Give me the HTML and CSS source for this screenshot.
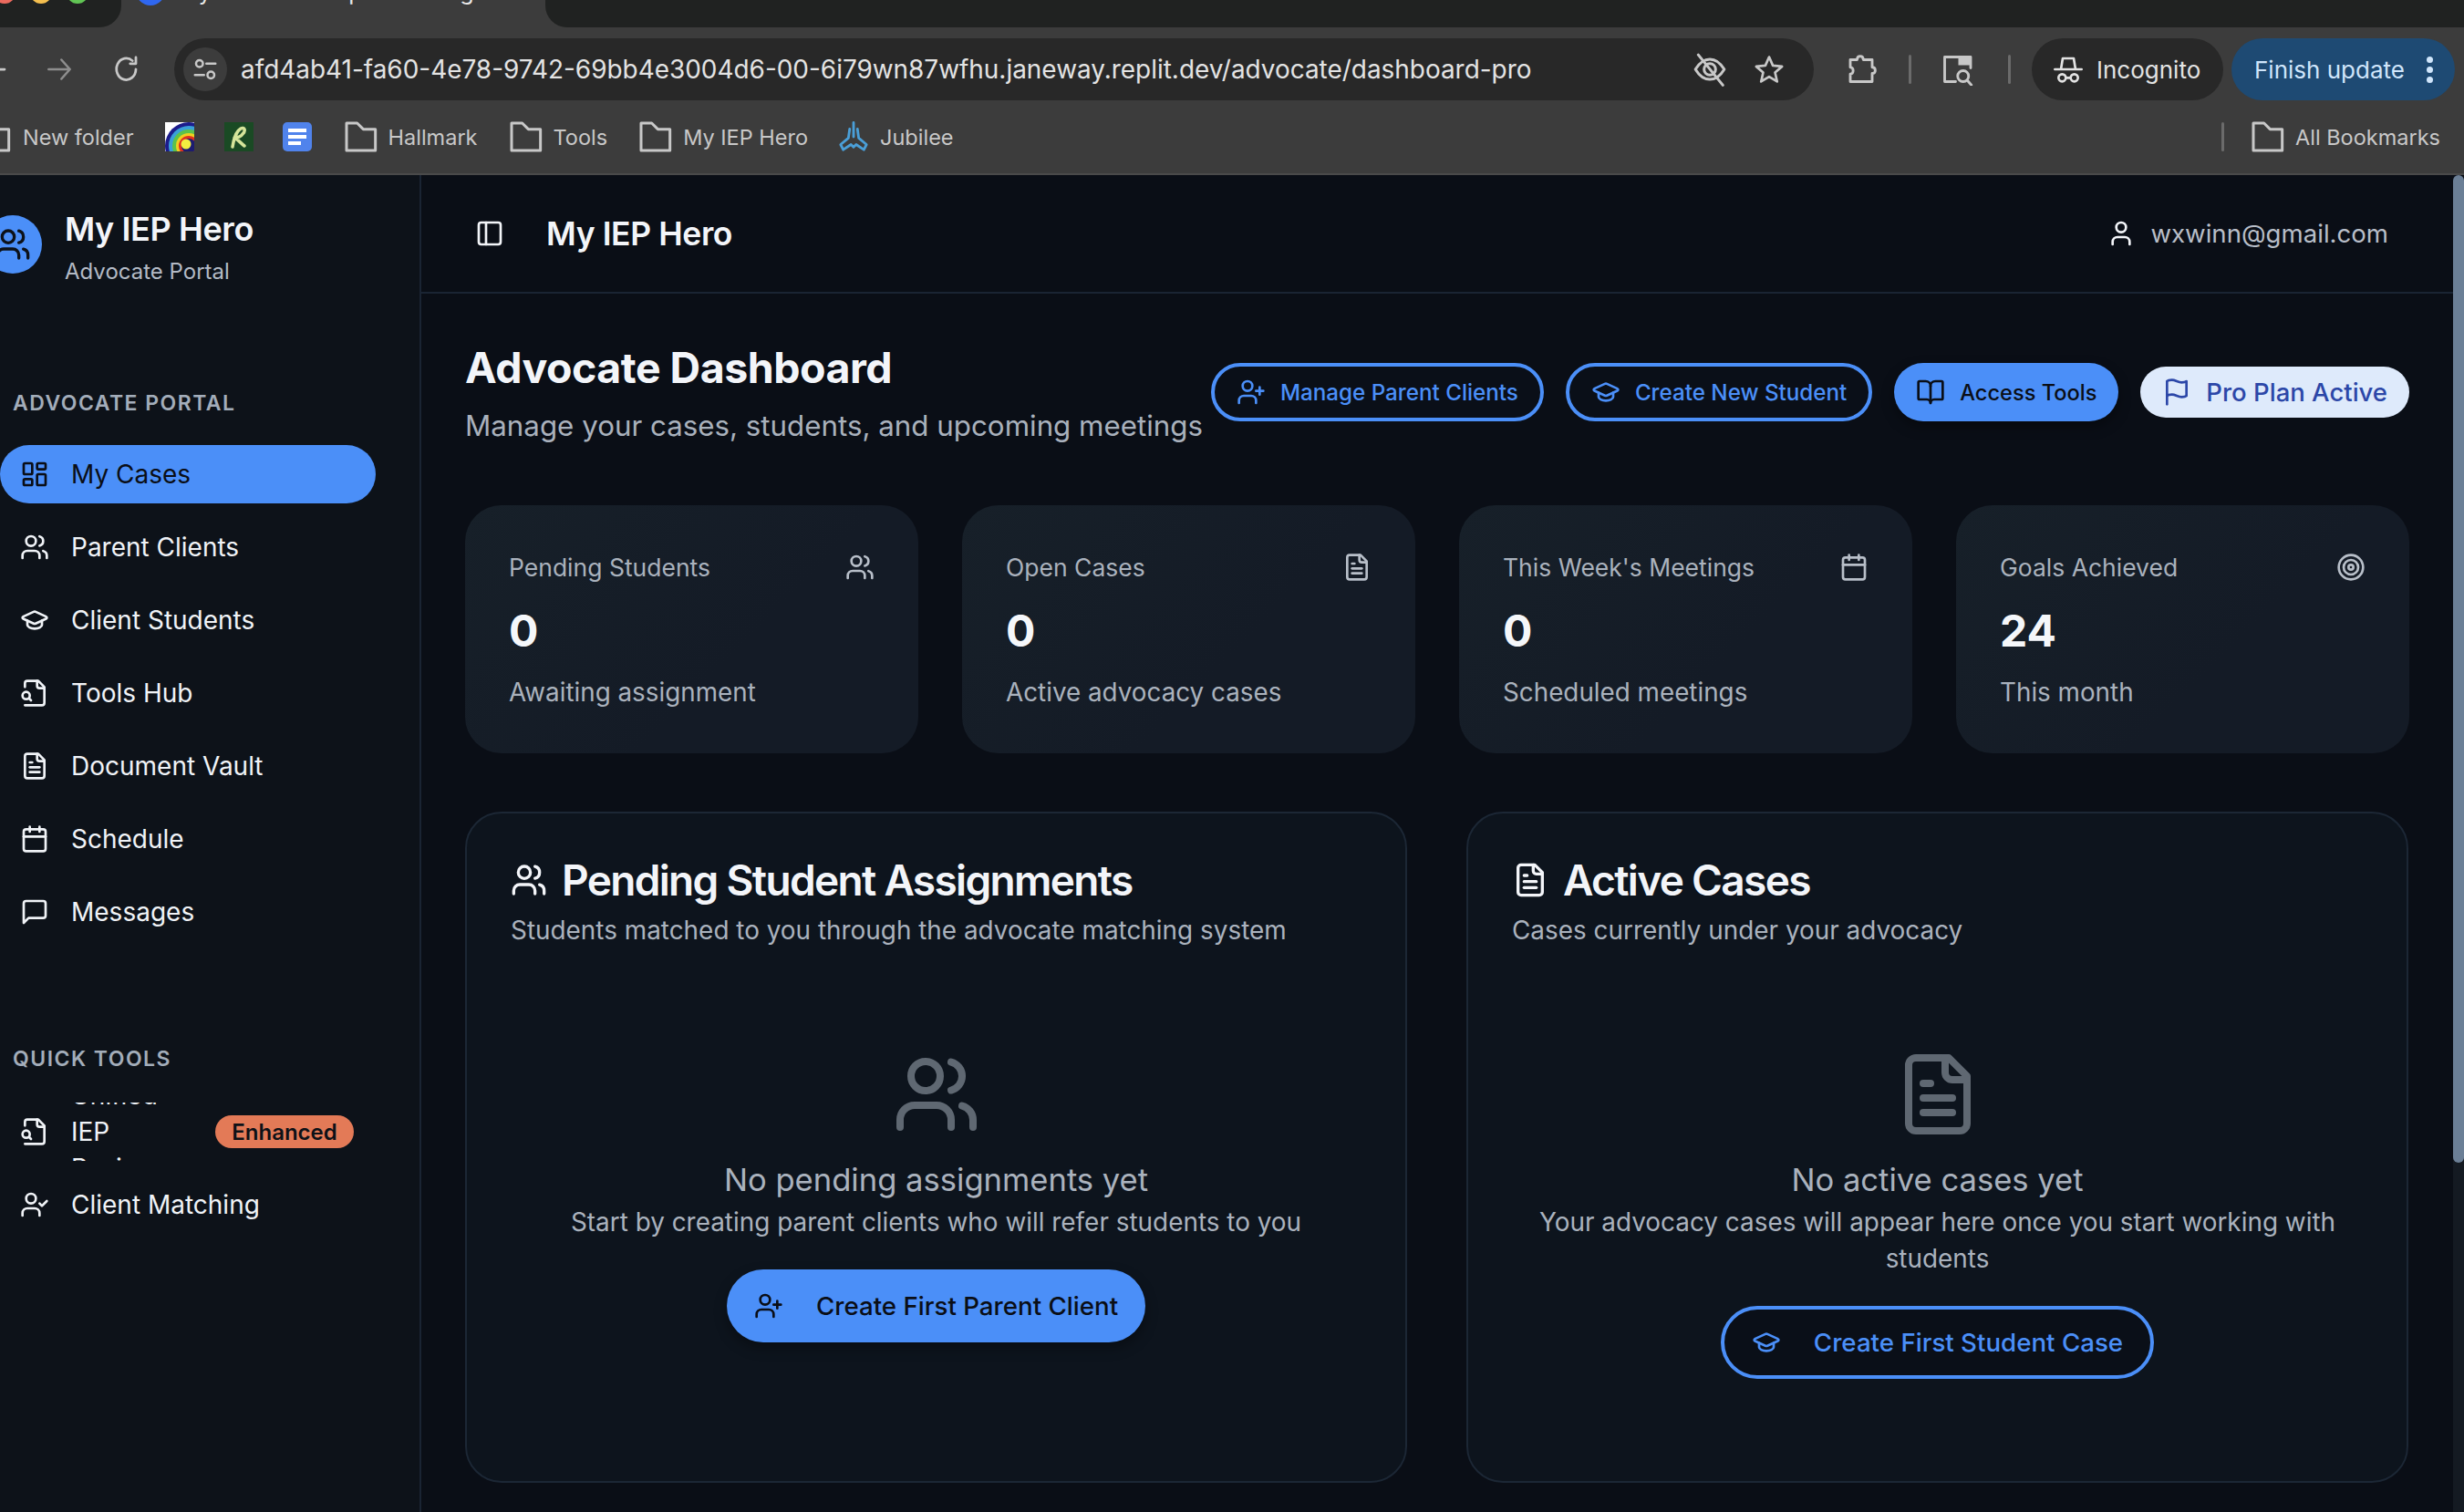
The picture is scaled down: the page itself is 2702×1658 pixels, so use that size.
FILE: index.html
```html
<!DOCTYPE html>
<html lang="en">
<head>
<meta charset="utf-8">
<title>My IEP Hero</title>
<link rel="stylesheet" href="styles.css">
</head>
<body>
<svg class="sprite" xmlns="http://www.w3.org/2000/svg">
  <symbol id="i-users" viewBox="0 0 24 24"><path d="M16 21v-2a4 4 0 0 0-4-4H6a4 4 0 0 0-4 4v2"/><circle cx="9" cy="7" r="4"/><path d="M22 21v-2a4 4 0 0 0-3-3.87"/><path d="M16 3.13a4 4 0 0 1 0 7.75"/></symbol>
  <symbol id="i-dash" viewBox="0 0 24 24"><rect width="7" height="9" x="3" y="3" rx="1"/><rect width="7" height="5" x="14" y="3" rx="1"/><rect width="7" height="9" x="14" y="12" rx="1"/><rect width="7" height="5" x="3" y="16" rx="1"/></symbol>
  <symbol id="i-cap" viewBox="0 0 24 24"><path d="M21.42 10.922a1 1 0 0 0-.019-1.838L12.83 5.18a2 2 0 0 0-1.66 0L2.6 9.08a1 1 0 0 0 0 1.832l8.57 3.908a2 2 0 0 0 1.66 0z"/><path d="M6 12.5V16a6 3 0 0 0 12 0v-3.5"/></symbol>
  <symbol id="i-search-file" viewBox="0 0 24 24"><path d="M4 22h14a2 2 0 0 0 2-2V7l-5-5H6a2 2 0 0 0-2 2v3"/><path d="M14 2v4a2 2 0 0 0 2 2h4"/><path d="M5 17a3 3 0 1 0 0-6 3 3 0 0 0 0 6z"/><path d="m9 18-1.5-1.5"/></symbol>
  <symbol id="i-file" viewBox="0 0 24 24"><path d="M15 2H6a2 2 0 0 0-2 2v16a2 2 0 0 0 2 2h12a2 2 0 0 0 2-2V7Z"/><path d="M14 2v4a2 2 0 0 0 2 2h4"/><path d="M10 9H8"/><path d="M16 13H8"/><path d="M16 17H8"/></symbol>
  <symbol id="i-cal" viewBox="0 0 24 24"><path d="M8 2v4"/><path d="M16 2v4"/><rect width="18" height="18" x="3" y="4" rx="2"/><path d="M3 10h18"/></symbol>
  <symbol id="i-msg" viewBox="0 0 24 24"><path d="M21 15a2 2 0 0 1-2 2H7l-4 4V5a2 2 0 0 1 2-2h14a2 2 0 0 1 2 2z"/></symbol>
  <symbol id="i-ucheck" viewBox="0 0 24 24"><path d="M16 21v-2a4 4 0 0 0-4-4H6a4 4 0 0 0-4 4v2"/><circle cx="9" cy="7" r="4"/><polyline points="16 11 18 13 22 9"/></symbol>
  <symbol id="i-uplus" viewBox="0 0 24 24"><path d="M16 21v-2a4 4 0 0 0-4-4H6a4 4 0 0 0-4 4v2"/><circle cx="9" cy="7" r="4"/><line x1="19" x2="19" y1="8" y2="14"/><line x1="22" x2="16" y1="11" y2="11"/></symbol>
  <symbol id="i-book" viewBox="0 0 24 24"><path d="M12 7v14"/><path d="M3 18a1 1 0 0 1-1-1V4a1 1 0 0 1 1-1h5a4 4 0 0 1 4 4 4 4 0 0 1 4-4h5a1 1 0 0 1 1 1v13a1 1 0 0 1-1 1h-6a3 3 0 0 0-3 3 3 3 0 0 0-3-3z"/></symbol>
  <symbol id="i-flag" viewBox="0 0 24 24"><path d="M4 15s1-1 4-1 5 2 8 2 4-1 4-1V3s-1 1-4 1-5-2-8-2-4 1-4 1z"/><line x1="4" x2="4" y1="22" y2="15"/></symbol>
  <symbol id="i-target" viewBox="0 0 24 24"><circle cx="12" cy="12" r="10"/><circle cx="12" cy="12" r="6"/><circle cx="12" cy="12" r="2"/></symbol>
  <symbol id="i-user" viewBox="0 0 24 24"><path d="M19 21v-2a4 4 0 0 0-4-4H9a4 4 0 0 0-4 4v2"/><circle cx="12" cy="7" r="4"/></symbol>
  <symbol id="i-panel" viewBox="0 0 24 24"><rect width="18" height="18" x="3" y="3" rx="2"/><path d="M9 3v18"/></symbol>
  <symbol id="i-folder" viewBox="0 0 24 24"><path d="M3 21V3h7l4 4h8v14z"/></symbol>
</svg>

<div class="browser">
  <div class="tabstrip">
    <div class="tab-left">
      <span class="light light-r"></span><span class="light light-y"></span><span class="light light-g"></span>
    </div>
    <div class="tab-active"><span class="tab-fav"></span><span class="tab-title">My IEP Hero - Spark Change</span></div>
    <div class="tab-rest"></div>
  </div>
  <div class="toolbar">
    <svg class="tb-back" viewBox="0 0 24 24"><path d="M20 12H4M11 5l-7 7 7 7"/></svg>
    <svg class="tb-fwd" viewBox="0 0 24 24"><path d="M2 12h20M14 3l8 9-8 9"/></svg>
    <svg class="tb-reload" viewBox="0 0 24 24"><path d="M20 12a8.5 9.5 0 1 1-3-7.5M20 1.5v5.5h-5"/></svg>
    <div class="omnibox">
      <span class="site-chip"><svg viewBox="0 0 24 24"><circle cx="7" cy="7" r="3"/><path d="M13 7h8M3 17h8"/><circle cx="17" cy="17" r="3"/></svg></span>
      <span class="url">afd4ab41-fa60-4e78-9742-69bb4e3004d6-00-6i79wn87wfhu.janeway.replit.dev/advocate/dashboard-pro</span>
      <svg class="tb-ico eye" viewBox="0 0 24 24"><path d="M2 12c3-5 6-7 10-7s7 2 10 7c-3 5-6 7-10 7s-7-2-10-7z"/><circle cx="12" cy="12" r="4"/><path d="M4 2l17 21"/></svg>
      <svg class="tb-ico star" viewBox="0 0 24 24"><path d="M12 2.5l2.9 6.6 7.1.7-5.4 4.7 1.6 7-6.2-3.7-6.2 3.7 1.6-7L2 9.8l7.1-.7z"/></svg>
    </div>
    <svg class="tb-ico ext" viewBox="0 0 24 24"><path d="M4 5h5c0-3.500 4.500-3.500 4.500 0H20v5.500c3 0 3 4.500 0 4.500v6H4v-5.500c2.800 0 2.800-5 0-5z"/></svg>
    <span class="tb-sep"></span>
    <svg class="tb-ico lens" viewBox="0 0 24 24"><path d="M11 21H3V3h19v8"/><path class="lens-fill" d="M13 3h9v6h-9z"/><circle cx="16.500" cy="17" r="4"/><path d="M19.500 20l3 3.500"/></svg>
    <span class="tb-sep tb-sep-2"></span>
    <div class="pill pill-incog">
      <svg viewBox="0 0 24 24"><path d="M1 12h22M6 12l1.500-9h9L18 12"/><circle cx="7" cy="19" r="3"/><circle cx="17" cy="19" r="3"/><path d="M10 19h4"/></svg>
      <span>Incognito</span>
    </div>
    <div class="pill pill-update">
      <span>Finish update</span>
      <span class="dots"><i></i><i></i><i></i></span>
    </div>
  </div>
  <div class="bookmarks">
    <svg class="bm-folder bm-clip" viewBox="0 0 24 24"><use href="#i-folder"/></svg>
    <span class="bm-text bm-first">New folder</span>
    <svg class="fav fav-first" viewBox="0 0 32 32"><rect width="32" height="32" fill="#fff"/><circle cx="26" cy="26" r="26" fill="#1c1c8c"/><circle cx="26" cy="26" r="22" fill="#3aa0d8"/><circle cx="26" cy="26" r="18" fill="#5cc24a"/><circle cx="26" cy="26" r="14" fill="#f0d020"/><circle cx="26" cy="26" r="11" fill="#e03020"/><circle cx="26" cy="26" r="8" fill="#1c1c70"/><circle cx="23" cy="24" r="5.500" fill="#f2ee40"/></svg>
    <svg class="fav" viewBox="0 0 32 32"><rect width="32" height="32" fill="#1a4a24"/><path d="M9 27c1-7 4-17 9-20 4-2 6 2 2 6-2 3-6 4-9 4 3 1 7 6 11 9" fill="none" stroke="#d5e49a" stroke-width="3.500" stroke-linecap="round"/></svg>
    <svg class="fav fav-doc" viewBox="0 0 32 32"><rect width="32" height="32" rx="5" fill="#5083ec"/><path d="M6 7h20v4H6zM6 14h20v4H6zM6 21h14v4H6z" fill="#fff"/></svg>
    <svg class="bm-folder bm-g1" viewBox="0 0 24 24"><use href="#i-folder"/></svg><span class="bm-text">Hallmark</span>
    <svg class="bm-folder bm-g2" viewBox="0 0 24 24"><use href="#i-folder"/></svg><span class="bm-text">Tools</span>
    <svg class="bm-folder bm-g2" viewBox="0 0 24 24"><use href="#i-folder"/></svg><span class="bm-text">My IEP Hero</span>
    <svg class="jubilee" viewBox="0 0 24 24"><path d="M12 1v11M9 6l-1 7-6 5 2 4 6-4 2 2 2-2 6 4 2-4-6-5-1-7"/></svg><span class="bm-text">Jubilee</span>
    <span class="bm-sep"></span>
    <svg class="bm-folder" viewBox="0 0 24 24"><use href="#i-folder"/></svg><span class="bm-text">All Bookmarks</span>
  </div>
</div>

<div class="app">
  <aside class="sidebar">
    <div class="brand">
      <span class="brand-logo"><svg class="ico-40" viewBox="0 0 24 24"><use href="#i-users"/></svg></span>
      <div>
        <div class="brand-name">My IEP Hero</div>
        <div class="brand-sub">Advocate Portal</div>
      </div>
    </div>
    <div class="nav-label">ADVOCATE PORTAL</div>
    <nav class="nav">
      <a class="nav-item active"><svg class="ico-32" viewBox="0 0 24 24"><use href="#i-dash"/></svg><span>My Cases</span></a>
      <a class="nav-item"><svg class="ico-32" viewBox="0 0 24 24"><use href="#i-users"/></svg><span>Parent Clients</span></a>
      <a class="nav-item"><svg class="ico-32" viewBox="0 0 24 24"><use href="#i-cap"/></svg><span>Client Students</span></a>
      <a class="nav-item"><svg class="ico-32" viewBox="0 0 24 24"><use href="#i-search-file"/></svg><span>Tools Hub</span></a>
      <a class="nav-item"><svg class="ico-32" viewBox="0 0 24 24"><use href="#i-file"/></svg><span>Document Vault</span></a>
      <a class="nav-item"><svg class="ico-32" viewBox="0 0 24 24"><use href="#i-cal"/></svg><span>Schedule</span></a>
      <a class="nav-item"><svg class="ico-32" viewBox="0 0 24 24"><use href="#i-msg"/></svg><span>Messages</span></a>
    </nav>
    <div class="nav-label nav-label-2">QUICK TOOLS</div>
    <nav class="nav nav-2">
      <a class="nav-item"><svg class="ico-32" viewBox="0 0 24 24"><use href="#i-search-file"/></svg><span class="clip-wrap"><span class="clip-text">Unified IEP Review</span></span><span class="badge">Enhanced</span></a>
      <a class="nav-item"><svg class="ico-32" viewBox="0 0 24 24"><use href="#i-ucheck"/></svg><span>Client Matching</span></a>
    </nav>
  </aside>

  <div class="main">
    <header class="topbar">
      <svg class="ico-32 panel-ico" viewBox="0 0 24 24"><use href="#i-panel"/></svg>
      <div class="topbar-title">My IEP Hero</div>
      <div class="account">
        <svg class="ico-32" viewBox="0 0 24 24"><use href="#i-user"/></svg>
        <span>wxwinn@gmail.com</span>
      </div>
    </header>

    <main class="content">
      <section class="page-head">
        <div>
          <h1>Advocate Dashboard</h1>
          <p>Manage your cases, students, and upcoming meetings</p>
        </div>
        <div class="actions">
          <a class="btn btn-outline"><svg class="ico-32" viewBox="0 0 24 24"><use href="#i-uplus"/></svg>Manage Parent Clients</a>
          <a class="btn btn-outline"><svg class="ico-32" viewBox="0 0 24 24"><use href="#i-cap"/></svg>Create New Student</a>
          <a class="btn btn-solid btn-tools"><svg class="ico-32" viewBox="0 0 24 24"><use href="#i-book"/></svg>Access Tools</a>
          <span class="plan"><svg class="ico-32" viewBox="0 0 24 24"><use href="#i-flag"/></svg>Pro Plan Active</span>
        </div>
      </section>

      <section class="stats">
        <article class="stat">
          <div class="stat-top"><span>Pending Students</span><svg class="ico-32" viewBox="0 0 24 24"><use href="#i-users"/></svg></div>
          <div class="stat-value">0</div>
          <div class="stat-sub">Awaiting assignment</div>
        </article>
        <article class="stat">
          <div class="stat-top"><span>Open Cases</span><svg class="ico-32" viewBox="0 0 24 24"><use href="#i-file"/></svg></div>
          <div class="stat-value">0</div>
          <div class="stat-sub">Active advocacy cases</div>
        </article>
        <article class="stat">
          <div class="stat-top"><span>This Week's Meetings</span><svg class="ico-32" viewBox="0 0 24 24"><use href="#i-cal"/></svg></div>
          <div class="stat-value">0</div>
          <div class="stat-sub">Scheduled meetings</div>
        </article>
        <article class="stat">
          <div class="stat-top"><span>Goals Achieved</span><svg class="ico-32" viewBox="0 0 24 24"><use href="#i-target"/></svg></div>
          <div class="stat-value">24</div>
          <div class="stat-sub">This month</div>
        </article>
      </section>

      <section class="panels">
        <article class="panel">
          <h2><svg class="ico-40" viewBox="0 0 24 24"><use href="#i-users"/></svg>Pending Student Assignments</h2>
          <p class="panel-sub">Students matched to you through the advocate matching system</p>
          <div class="empty">
            <svg class="ico-big" viewBox="0 0 24 24"><use href="#i-users"/></svg>
            <h3>No pending assignments yet</h3>
            <p>Start by creating parent clients who will refer students to you</p>
            <a class="btn-lg btn-solid"><svg class="ico-32" viewBox="0 0 24 24"><use href="#i-uplus"/></svg>Create First Parent Client</a>
          </div>
        </article>
        <article class="panel">
          <h2><svg class="ico-40" viewBox="0 0 24 24"><use href="#i-file"/></svg>Active Cases</h2>
          <p class="panel-sub">Cases currently under your advocacy</p>
          <div class="empty">
            <svg class="ico-big" viewBox="0 0 24 24"><use href="#i-file"/></svg>
            <h3>No active cases yet</h3>
            <p>Your advocacy cases will appear here once you start working with students</p>
            <a class="btn-lg btn-outline"><svg class="ico-32" viewBox="0 0 24 24"><use href="#i-cap"/></svg>Create First Student Case</a>
          </div>
        </article>
      </section>
    </main>
    <div class="scrollbar"><div class="scroll-thumb"></div></div>
  </div>
</div>
</body>
</html>
```
FILE: styles.css
```css
* { box-sizing: border-box; }
html, body { margin: 0; height: 100%; }
body {
  width: 2702px;
  height: 1658px;
  overflow: hidden;
  background: #0a0e16;
  color: #f3f5f9;
  font-family: Inter, "Liberation Sans", sans-serif;
  display: flex;
  flex-direction: column;
}
.sprite { display: none; }
svg { fill: none; stroke: currentColor; stroke-width: 2; stroke-linecap: round; stroke-linejoin: round; flex: none; display: block; }
.ico-32 { width: 32px; height: 32px; }
.ico-40 { width: 40px; height: 40px; }
h1, h2, h3, p { margin: 0; }

/* browser chrome */
.browser { height: 192px; flex: none; background: #3c3c3c; border-bottom: 2px solid #4a4a4a; color: #c8c8c8; }
.tabstrip { height: 30px; display: flex; background: #3c3c3c; overflow: hidden; }
.tab-left { width: 133px; background: #202221; border-bottom-right-radius: 24px; display: flex; gap: 16px; }
.light { width: 24px; height: 24px; border-radius: 50%; margin-top: -20px; flex: none; }
.light-r { background: #ec6a5e; margin-left: -7px; }
.light-y { background: #f4bf4f; }
.light-g { background: #61c554; }
.tab-active { width: 465px; display: flex; gap: 14px; padding-left: 16px; }
.tab-fav { width: 32px; height: 32px; border-radius: 50%; background: #2f67f0; margin-top: -26px; flex: none; }
.tab-title { font-size: 25px; line-height: 30px; margin-top: -24px; color: #e8e8e8; white-space: nowrap; }
.tab-rest { flex: 1; background: #202221; border-bottom-left-radius: 24px; }
.toolbar { height: 80px; display: flex; align-items: center; padding-top: 12px; background: #3c3c3c; position: relative; }
.toolbar > svg { stroke: #c8c8c8; }
.tb-back { width: 30px; height: 30px; margin-left: -20px; stroke-width: 2.200; }
.toolbar > .tb-fwd { width: 28px; height: 28px; margin-left: 41px; stroke: #8e8e8e; stroke-width: 2.200; }
.tb-reload { width: 30px; height: 30px; margin-left: 45px; stroke-width: 2.200; }
.omnibox { width: 1798px; height: 68px; margin-left: 37px; border-radius: 34px; background: #282828; display: flex; align-items: center; padding-left: 10px; flex: none; }
.site-chip { width: 48px; height: 48px; border-radius: 50%; background: #3c3c3c; display: flex; align-items: center; justify-content: center; flex: none; }
.site-chip svg { width: 30px; height: 30px; stroke-width: 2; }
.url { margin-left: 15px; font-size: 27.930px; color: #e3e3e3; white-space: nowrap; width: 1592px; flex: none; }
.tb-ico { width: 38px; height: 38px; stroke-width: 1.900; }
.omnibox .star { margin-left: 29px; width: 34px; height: 34px; }
.toolbar .ext { margin-left: 34px; width: 36px; height: 36px; }
.tb-sep { width: 3px; height: 32px; border-radius: 2px; background: #6b6b6b; margin-left: 34px; flex: none; }
.toolbar .lens { margin-left: 32px; width: 36px; height: 36px; }
.lens-fill { fill: #c8c8c8; stroke: none; }
.tb-sep-2 { margin-left: 38px; }
.pill { height: 68px; border-radius: 34px; display: flex; align-items: center; font-size: 26px; flex: none; }
.pill-incog { width: 210px; background: #282828; margin-left: 23px; padding-left: 24px; gap: 15px; color: #e3e3e3; }
.pill-incog svg { width: 32px; height: 32px; stroke: #e3e3e3; }
.pill-update { width: 245px; background: #1e4a73; color: #cfe5fb; margin-left: 9px; padding-left: 25px; }
.dots { display: flex; flex-direction: column; gap: 4px; margin-left: 24px; }
.dots i { width: 7px; height: 7px; border-radius: 50%; background: #cfe5fb; display: block; }
.bookmarks { height: 80px; display: flex; align-items: center; }
.bm-text { font-size: 23.500px; color: #c8c8c8; white-space: nowrap; margin-left: 11px; }
.bm-first { margin-left: 12px; }
.bm-folder { width: 40px; height: 40px; stroke: #c8c8c8; stroke-width: 1.800; }
.bm-clip { margin-left: -27px; }
.fav { width: 32px; height: 32px; stroke: none; margin-left: 33px; }
.fav-first { margin-left: 34px; }
.fav-doc { margin-left: 32px; }
.bm-g1 { margin-left: 33px; }
.bm-g2 { margin-left: 32px; }
.jubilee { width: 34px; height: 34px; margin-left: 33px; stroke: #4a9fd8; stroke-width: 2; }
.jubilee + .bm-text { margin-left: 12px; }
.bm-sep { width: 3px; height: 32px; background: #6b6b6b; border-radius: 2px; margin-left: auto; }
.bm-sep + .bm-folder { margin-left: 27px; }
.bm-text:last-child { margin-right: 26px; }

/* app */
.app { flex: 1; display: flex; min-height: 0; }
.sidebar { width: 462px; flex: none; background: #0d1219; border-right: 2px solid #1a2433; padding-top: 44px; }
.brand { display: flex; align-items: center; gap: 25px; margin-left: -18px; height: 64px; }
.brand-logo { width: 64px; height: 64px; border-radius: 50%; background: #4b8ff8; color: #0d1219; display: flex; align-items: center; justify-content: center; flex: none; }
.brand-name { font-size: 36px; font-weight: 600; line-height: 44px; margin-top: 5px; letter-spacing: -0.4px; }
.brand-sub { font-size: 24px; line-height: 30px; color: #b3bac5; margin-top: 10px; }
.nav-label { font-size: 23px; font-weight: 600; line-height: 30px; color: #a3adba; letter-spacing: 1.470px; padding-left: 14px; margin-top: 127px; }
.nav-label-2 { margin-top: 114px; }
.nav { display: flex; flex-direction: column; gap: 16px; margin-top: 31px; }
.nav-2 { margin-top: 33px; }
.nav-item { height: 64px; width: 412px; padding-left: 22px; padding-right: 24px; display: flex; align-items: center; gap: 24px; font-size: 28px; color: #f0f3f7; border-radius: 32px; }
.nav-item.active { background: #4b8ff8; color: #0a0e16; }
.clip-wrap { height: 64px; width: 100px; display: flex; align-items: center; overflow: hidden; flex: none; }
.clip-text { display: block; width: 100px; line-height: 40px; flex: none; }
.badge { margin-left: auto; width: 152px; height: 36px; border-radius: 18px; background: #e37a57; color: #0d1117; font-size: 24px; font-weight: 600; display: flex; align-items: center; justify-content: center; }

.main { flex: 1; position: relative; min-width: 0; display: grid; grid-template-columns: 1fr 12px; grid-template-rows: 130px 1fr; }
.topbar { grid-column: 1 / 3; border-bottom: 2px solid #1a2433; display: flex; align-items: center; padding-left: 59px; background: #0a0e16; padding-right: 83px; }
.panel-ico { color: #f3f5f9; }
.topbar-title { font-size: 35.500px; font-weight: 600; letter-spacing: -0.4px; margin-left: 46px; }
.account { margin-left: auto; display: flex; align-items: center; gap: 16px; font-size: 27.600px; color: #b8bec8; }
.account svg { color: #f3f5f9; }
.content { padding: 48px 48px 0 48px; min-width: 0; overflow: hidden; }
.page-head { display: flex; justify-content: space-between; align-items: center; height: 120px; }
h1 { font-size: 46.500px; font-weight: 700; line-height: 60px; letter-spacing: -0.5px; }
.page-head p { font-size: 31.300px; color: #a9b1bc; line-height: 40px; margin-top: 14px; white-space: nowrap; }
.actions { display: flex; align-items: center; gap: 24px; flex: none; }
.btn { height: 64px; border-radius: 32px; display: flex; align-items: center; gap: 16px; font-size: 24.200px; font-weight: 500; padding: 0 24px; white-space: nowrap; }
.btn-tools { font-size: 23.600px; }
.btn-outline { border: 4px solid #4b8ff8; color: #4b8ff8; background: #0a0f18; }
.btn-solid { background: #4b8ff8; color: #0a0e16; box-shadow: 0 6px 14px rgba(0,0,0,.35); }
.plan { height: 56px; border-radius: 28px; background: #deeafb; color: #2c47a8; display: flex; align-items: center; gap: 16px; padding: 0 24px; font-size: 27.500px; font-weight: 500; white-space: nowrap; }
.stats { display: grid; grid-template-columns: repeat(4, 1fr); gap: 48px; margin-top: 64px; }
.stat { height: 272px; padding: 52px 48px 48px; border-radius: 40px; background: linear-gradient(135deg, #172029, #141b26 60%); }
.stat-top { display: flex; justify-content: space-between; align-items: center; height: 32px; font-size: 26.500px; color: #aab2bd; }
.stat-top svg { color: #b8bfc9; }
.stat-value { font-size: 48px; font-weight: 700; line-height: 58px; margin-top: 25px; color: #f5f7fa; }
.stat-sub { font-size: 27.800px; line-height: 38px; margin-top: 19px; color: #aab2bd; }
.panels { display: grid; grid-template-columns: 1033px 1033px; gap: 65px; margin-top: 64px; }
.panel { height: 736px; border: 2px solid #1c2735; border-radius: 40px; background: #0d141d; padding: 43px 48px 0; }
.panel h2 { display: flex; align-items: center; gap: 16px; font-size: 46px; font-weight: 600; line-height: 60px; letter-spacing: -1.670px; }
.panel-sub { font-size: 27.900px; line-height: 40px; color: #aab2bd; margin-top: 5px; }
.empty { display: flex; flex-direction: column; align-items: center; text-align: center; margin-top: 112px; }
.ico-big { width: 96px; height: 96px; color: #5f6872; }
.empty h3 { font-size: 34.600px; font-weight: 400; line-height: 48px; margin-top: 21px; color: #aab2bd; }
.empty p { font-size: 27.900px; line-height: 40px; color: #aab2bd; margin-top: 3px; }
.btn-lg { height: 80px; border-radius: 40px; display: flex; align-items: center; gap: 36px; font-size: 27.700px; font-weight: 500; padding: 0 30px; margin-top: 32px; white-space: nowrap; }
.scrollbar { background: #141a22; }
.scroll-thumb { height: 1083px; margin-top: -130px; background: #6b7f96; border-radius: 6px; position: relative; }
```
